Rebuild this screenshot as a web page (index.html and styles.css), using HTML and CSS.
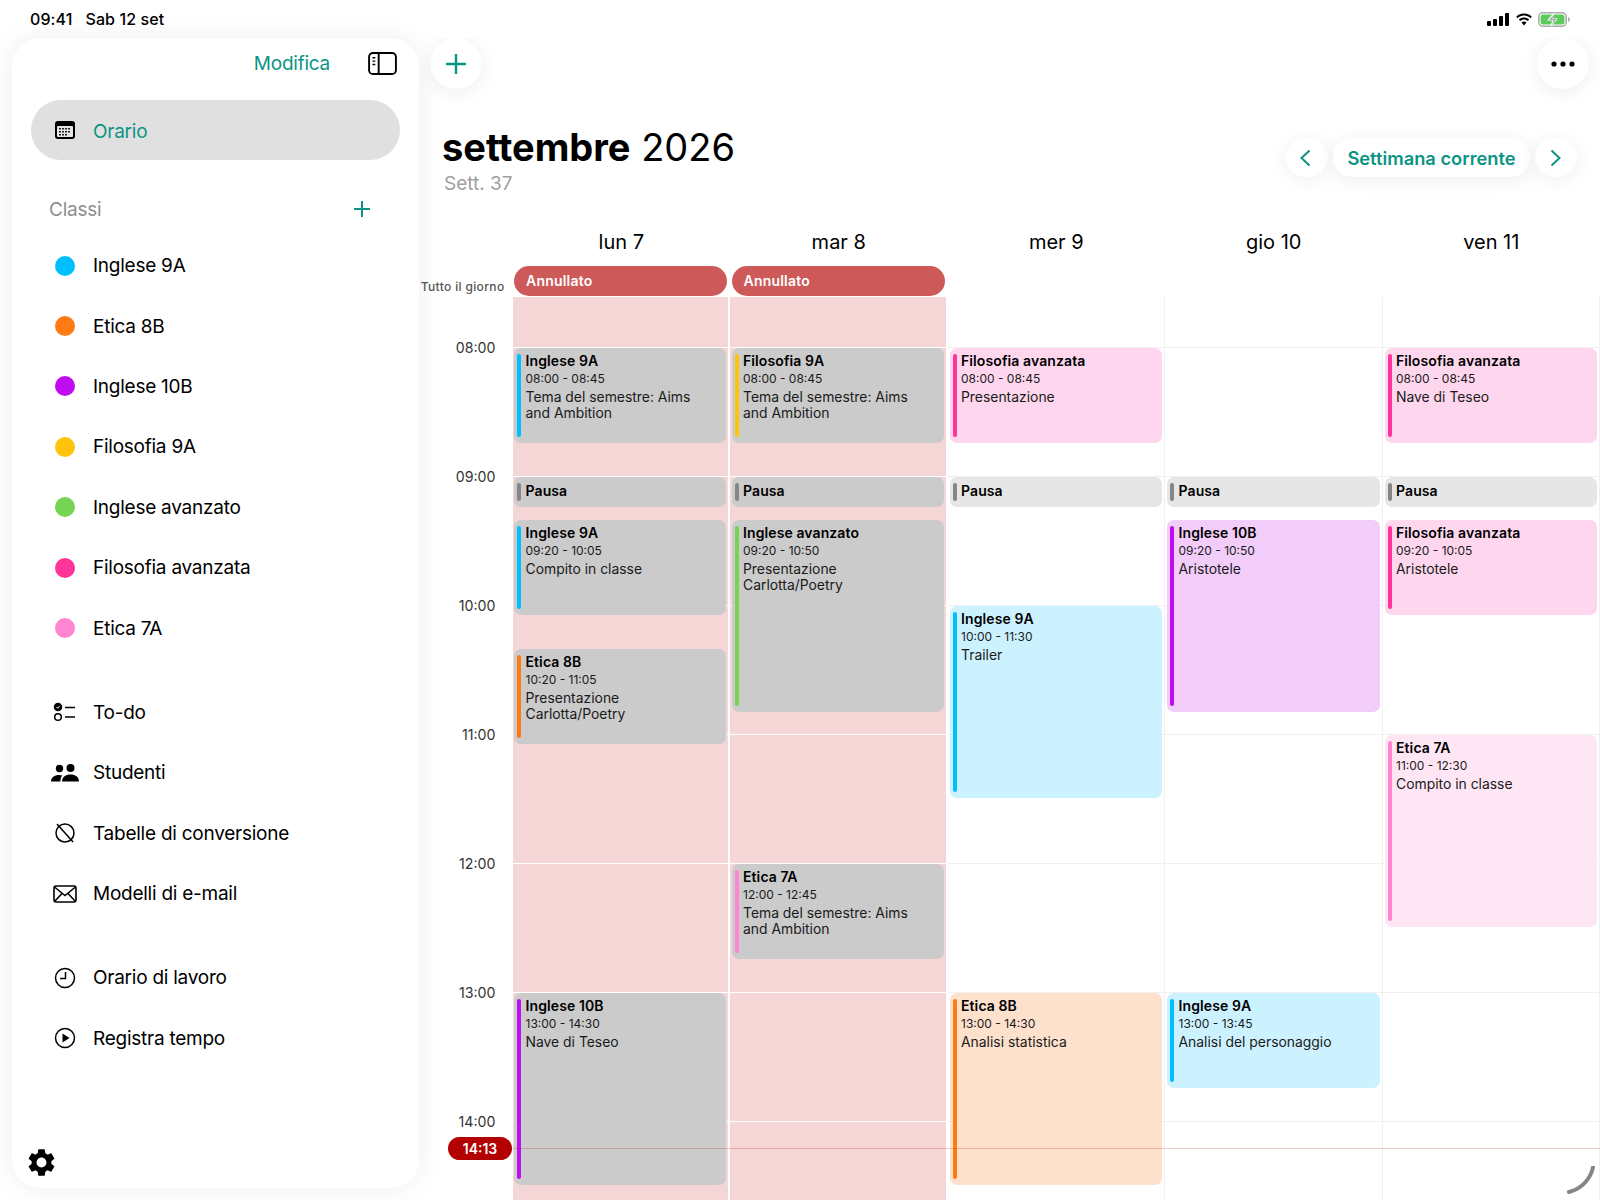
FILE: index.html
```html
<!DOCTYPE html>
<html lang="it">
  <head>
    <meta charset="UTF-8">
    <title>Orario</title>
    <link rel="stylesheet" href="styles.css">
  </head>
  <body>
    <div class="status-bar">
      <div class="status-left"><span>09:41</span><span>Sab 12 set</span></div>
      <div class="status-right">
        <svg width="23" height="13" viewBox="0 0 23 13"><rect x="0" y="8" width="4" height="5" rx="1"/><rect x="6" y="6" width="4" height="7" rx="1"/><rect x="12" y="3" width="4" height="10" rx="1"/><rect x="18" y="0" width="4" height="13" rx="1"/></svg>
        <svg width="18" height="13" viewBox="0 0 18 13"><path d="M9 2.600c2.500 0 4.800 1 6.500 2.600l1.300-1.400C14.700 1.800 12 .6 9 .6S3.300 1.800 1.200 3.800l1.300 1.400C4.200 3.600 6.500 2.600 9 2.600z"/><path d="M9 6.400c1.500 0 2.800.6 3.800 1.500l1.300-1.400C12.800 5.200 11 4.500 9 4.500s-3.800.7-5.100 2l1.300 1.400C6.200 7 7.500 6.400 9 6.400z"/><path d="M9 8.400c-1 0-1.900.4-2.500 1L9 12.500l2.500-3.100c-.6-.6-1.500-1-2.500-1z"/></svg>
        <svg width="32" height="15" viewBox="0 0 32 15"><rect x=".75" y=".75" width="27.500" height="13.500" rx="4" fill="none" stroke="#a9a9a9" stroke-width="1.500"/><rect x="2.500" y="2.500" width="24" height="10" rx="2.500" fill="#5ccb5f"/><path d="M16.500 0 9 8.500h5L12.500 15 20 6.500h-5z" fill="#fff"/><path d="M16 2.500 11 8h4.200l-1 4.500L18.500 7h-4.200z" fill="#a9a9a9"/><path d="M30 5v5c1-.3 1.800-1.300 1.800-2.500S31 5.300 30 5z" fill="#a9a9a9"/></svg>
      </div>
    </div>

    <div class="app">
      <aside class="sidebar">
        <div class="side-head">
          <span class="edit-link">Modifica</span>
          <svg class="side-toggle" width="29" height="23" viewBox="0 0 30 24" fill="none" stroke="#000" stroke-width="2"><rect x="1" y="1" width="28" height="22" rx="4"/><path d="M11 1v22"/><path d="M4.500 6h3M4.500 9.500h3M4.500 13h3" stroke-width="1.500"/></svg>
        </div>

        <div class="side-item active">
          <span class="side-icon">
            <svg width="20" height="18" viewBox="0 0 20 18"><rect width="20" height="18" rx="3" fill="#000"/><rect x="2" y="5" width="16" height="11" rx="1" fill="#e6e6e6"/><g fill="#222"><rect x="4" y="7" width="2" height="1.500"/><rect x="7" y="7" width="2" height="1.500"/><rect x="10" y="7" width="2" height="1.500"/><rect x="13" y="7" width="2" height="1.500"/><rect x="4" y="10" width="2" height="1.500"/><rect x="7" y="10" width="2" height="1.500"/><rect x="10" y="10" width="2" height="1.500"/><rect x="13" y="10" width="2" height="1.500"/><rect x="4" y="13" width="2" height="1.500"/><rect x="7" y="13" width="2" height="1.500"/><rect x="10" y="13" width="2" height="1.500"/></g></svg>
          </span>
          <span class="active-label">Orario</span>
        </div>

        <div class="side-section">
          <span>Classi</span>
          <svg width="18" height="18" viewBox="0 0 18 18" stroke="#0b9484" stroke-width="2"><path d="M9 1v16M1 9h16"/></svg>
        </div>

        <div class="side-group">
          <div class="side-item"><span class="side-icon"><i class="dot c-cyan"></i></span><span>Inglese 9A</span></div>
          <div class="side-item"><span class="side-icon"><i class="dot c-orange"></i></span><span>Etica 8B</span></div>
          <div class="side-item"><span class="side-icon"><i class="dot c-purple"></i></span><span>Inglese 10B</span></div>
          <div class="side-item"><span class="side-icon"><i class="dot c-yellow"></i></span><span>Filosofia 9A</span></div>
          <div class="side-item"><span class="side-icon"><i class="dot c-green"></i></span><span>Inglese avanzato</span></div>
          <div class="side-item"><span class="side-icon"><i class="dot c-hot"></i></span><span>Filosofia avanzata</span></div>
          <div class="side-item"><span class="side-icon"><i class="dot c-pink"></i></span><span>Etica 7A</span></div>
        </div>

        <div class="side-group">
          <div class="side-item">
            <span class="side-icon"><svg width="24" height="20" viewBox="0 0 24 20" fill="none" stroke="#000" stroke-width="1.500"><circle cx="5" cy="5" r="3.500" fill="#000"/><path d="M3.500 5l1.200 1.200L6.700 4" stroke="#fff" stroke-width="1"/><circle cx="5" cy="15" r="3.300"/><path d="M12 5.500h10M12 15h10"/></svg></span>
            <span>To-do</span>
          </div>
          <div class="side-item">
            <span class="side-icon"><svg width="28" height="18" viewBox="0 0 28 18"><circle cx="8.500" cy="4.500" r="3.700"/><circle cx="19.500" cy="4" r="4"/><path d="M0 17.500c0-4 3.500-6.500 8-6.500 1.300 0 2.500.2 3.500.6-1.300 1.300-2 3-2.100 5.900z"/><path d="M11 17.500c0-4.500 3.800-7 8.500-7s8.500 2.500 8.500 7z"/></svg></span>
            <span>Studenti</span>
          </div>
          <div class="side-item">
            <span class="side-icon"><svg width="24" height="24" viewBox="0 0 24 24" fill="none" stroke="#000" stroke-width="1.500"><circle cx="12" cy="12" r="9"/><path d="M4 3l16 18"/></svg></span>
            <span>Tabelle di conversione</span>
          </div>
          <div class="side-item">
            <span class="side-icon"><svg width="24" height="18" viewBox="0 0 24 18" fill="none" stroke="#000" stroke-width="1.600"><rect x="1" y="1" width="22" height="16" rx="2"/><path d="M1.500 2l10.500 8.500L22.500 2M1.500 16.500l7.500-8M22.500 16.500l-7.500-8"/></svg></span>
            <span>Modelli di e-mail</span>
          </div>
        </div>

        <div class="side-group">
          <div class="side-item">
            <span class="side-icon"><svg width="22" height="22" viewBox="0 0 22 22" fill="none" stroke="#000" stroke-width="1.500"><circle cx="11" cy="11" r="9.500"/><path d="M11.500 5v6.500H6"/></svg></span>
            <span>Orario di lavoro</span>
          </div>
          <div class="side-item">
            <span class="side-icon"><svg width="22" height="22" viewBox="0 0 22 22" fill="none" stroke="#000" stroke-width="1.500"><circle cx="11" cy="11" r="9.500"/><path d="M8.500 6.500l7 4.500-7 4.500z" fill="#000" stroke="none"/></svg></span>
            <span>Registra tempo</span>
          </div>
        </div>

        <svg class="side-gear" width="33" height="33" viewBox="0 0 24 24"><path d="M19.140 12.940c.04-.3.06-.61.06-.94 0-.32-.02-.64-.07-.94l2.030-1.580c.18-.14.23-.41.12-.61l-1.920-3.320c-.12-.22-.37-.29-.59-.22l-2.390.96c-.5-.38-1.030-.7-1.620-.94l-.36-2.540c-.04-.24-.24-.41-.48-.41h-3.840c-.24 0-.43.17-.47.41l-.36 2.540c-.59.24-1.130.57-1.620.94l-2.390-.96c-.22-.08-.47 0-.59.22L2.740 8.870c-.12.21-.08.47.12.61l2.030 1.580c-.05.3-.09.63-.09.94s.02.64.07.94l-2.030 1.580c-.18.14-.23.41-.12.61l1.920 3.320c.12.22.37.29.59.22l2.390-.96c.5.38 1.030.7 1.620.94l.36 2.540c.05.24.24.41.48.41h3.840c.24 0 .44-.17.47-.41l.36-2.540c.59-.24 1.130-.56 1.620-.94l2.390.96c.22.08.47 0 .59-.22l1.920-3.320c.12-.22.07-.47-.12-.61l-2.010-1.580zM12 15.600c-1.980 0-3.600-1.620-3.600-3.600s1.620-3.600 3.600-3.600 3.600 1.620 3.600 3.600-1.620 3.600-3.600 3.600z"/></svg>
      </aside>

      <main class="main">
        <div class="top-row">
          <button class="round-btn">
            <svg width="24" height="24" viewBox="0 0 24 24" stroke="#0b9484" stroke-width="2.400"><path d="M12 2v20M2 12h20"/></svg>
          </button>
          <button class="round-btn">
            <svg width="24" height="6" viewBox="0 0 24 6"><circle cx="3" cy="3" r="2.600"/><circle cx="12" cy="3" r="2.600"/><circle cx="21" cy="3" r="2.600"/></svg>
          </button>
        </div>

        <div class="title-row">
          <div>
            <h1 class="month"><b>settembre</b> 2026</h1>
            <div class="week-no">Sett. 37</div>
          </div>
          <div class="week-nav">
            <button class="nav-btn nav-prev"><svg width="12" height="18" viewBox="0 0 12 18" fill="none" stroke="#0b9484" stroke-width="2"><path d="M10.500 1.500 2.500 9l8 7.500"/></svg></button>
            <button class="nav-btn nav-now">Settimana corrente</button>
            <button class="nav-btn"><svg width="12" height="18" viewBox="0 0 12 18" fill="none" stroke="#0b9484" stroke-width="2"><path d="M1.500 1.500 9.500 9l-8 7.500"/></svg></button>
          </div>
        </div>

        <div class="week-head">
          <div></div>
          <div>lun 7</div>
          <div>mar 8</div>
          <div>mer 9</div>
          <div>gio 10</div>
          <div>ven 11</div>
        </div>

        <div class="allday-row">
          <div class="allday-label">Tutto il giorno</div>
          <div class="allday-cell"><div class="allday-pill">Annullato</div></div>
          <div class="allday-cell"><div class="allday-pill">Annullato</div></div>
          <div></div>
          <div></div>
          <div></div>
        </div>

        <div class="week-body">
          <div class="hours">
            <div>08:00</div>
            <div>09:00</div>
            <div>10:00</div>
            <div>11:00</div>
            <div>12:00</div>
            <div>13:00</div>
            <div>14:00</div>
          </div>

          <div class="day cancelled">
            <div class="event c-cyan" style="--start:0;--len:45"><b>Inglese 9A</b><small>08:00 - 08:45</small><p>Tema del semestre: Aims and Ambition</p></div>
            <div class="event c-gray" style="--start:60;--len:15"><b>Pausa</b></div>
            <div class="event c-cyan" style="--start:80;--len:45"><b>Inglese 9A</b><small>09:20 - 10:05</small><p>Compito in classe</p></div>
            <div class="event c-orange" style="--start:140;--len:45"><b>Etica 8B</b><small>10:20 - 11:05</small><p>Presentazione Carlotta/Poetry</p></div>
            <div class="event c-purple" style="--start:300;--len:90"><b>Inglese 10B</b><small>13:00 - 14:30</small><p>Nave di Teseo</p></div>
          </div>

          <div class="day cancelled">
            <div class="event c-yellow" style="--start:0;--len:45"><b>Filosofia 9A</b><small>08:00 - 08:45</small><p>Tema del semestre: Aims and Ambition</p></div>
            <div class="event c-gray" style="--start:60;--len:15"><b>Pausa</b></div>
            <div class="event c-green" style="--start:80;--len:90"><b>Inglese avanzato</b><small>09:20 - 10:50</small><p>Presentazione Carlotta/Poetry</p></div>
            <div class="event c-pink" style="--start:240;--len:45"><b>Etica 7A</b><small>12:00 - 12:45</small><p>Tema del semestre: Aims and Ambition</p></div>
          </div>

          <div class="day">
            <div class="event c-hot" style="--start:0;--len:45"><b>Filosofia avanzata</b><small>08:00 - 08:45</small><p>Presentazione</p></div>
            <div class="event c-gray" style="--start:60;--len:15"><b>Pausa</b></div>
            <div class="event c-cyan" style="--start:120;--len:90"><b>Inglese 9A</b><small>10:00 - 11:30</small><p>Trailer</p></div>
            <div class="event c-orange" style="--start:300;--len:90"><b>Etica 8B</b><small>13:00 - 14:30</small><p>Analisi statistica</p></div>
          </div>

          <div class="day">
            <div class="event c-gray" style="--start:60;--len:15"><b>Pausa</b></div>
            <div class="event c-purple" style="--start:80;--len:90"><b>Inglese 10B</b><small>09:20 - 10:50</small><p>Aristotele</p></div>
            <div class="event c-cyan" style="--start:300;--len:45"><b>Inglese 9A</b><small>13:00 - 13:45</small><p>Analisi del personaggio</p></div>
          </div>

          <div class="day">
            <div class="event c-hot" style="--start:0;--len:45"><b>Filosofia avanzata</b><small>08:00 - 08:45</small><p>Nave di Teseo</p></div>
            <div class="event c-gray" style="--start:60;--len:15"><b>Pausa</b></div>
            <div class="event c-hot" style="--start:80;--len:45"><b>Filosofia avanzata</b><small>09:20 - 10:05</small><p>Aristotele</p></div>
            <div class="event c-pink" style="--start:180;--len:90"><b>Etica 7A</b><small>11:00 - 12:30</small><p>Compito in classe</p></div>
          </div>

          <div class="now-line"></div>
          <div class="now-pill">14:13</div>
          <svg class="pencil-mark" width="30" height="30" viewBox="0 0 30 30" fill="none" stroke="#858585" stroke-width="4" stroke-linecap="round"><path d="M27 1C25 12 16 23 3 26"/></svg>
        </div>
      </main>
    </div>
  </body>
</html>
```

FILE: styles.css
```css
body {
  margin: 0;
  width: 1600px;
  height: 1200px;
  overflow: hidden;
  background: #fff;
  color: #000;
  font-family: Inter, "Liberation Sans", sans-serif;
}

button {
  border: none;
  font-family: inherit;
  cursor: pointer;
}

/* class colours */
.c-cyan { --bar: #00bfff; --tint: #cdf2ff; }
.c-orange { --bar: #ff7a12; --tint: #fde1cc; }
.c-purple { --bar: #bf0cf0; --tint: #f2cdf9; }
.c-yellow { --bar: #ffc30b; --tint: #fff2c8; }
.c-green { --bar: #77d353; --tint: #e2f6da; }
.c-hot { --bar: #ff3399; --tint: #fed7ee; }
.c-pink { --bar: #ff85d0; --tint: #fee6f5; }
.c-gray { --bar: #868686; --tint: #e6e6e6; }

.status-bar {
  height: 38px;
  padding: 0 30px;
  display: flex;
  justify-content: space-between;
  align-items: center;
  font-size: 16px;
  font-weight: 500;
  letter-spacing: 0.1px;
}

.status-left {
  display: flex;
  gap: 13px;
}

.status-right {
  display: flex;
  align-items: center;
  gap: 5px;
}

.app {
  display: flex;
  height: 1162px;
}

/* sidebar */
.sidebar {
  position: relative;
  z-index: 2;
  width: 407px;
  height: 1150px;
  margin-left: 12px;
  flex: none;
  display: flex;
  flex-direction: column;
  background: #fff;
  border-radius: 28px;
  box-shadow: 0 0 28px rgba(0, 0, 0, 0.07);
  font-size: 19px;
  letter-spacing: -0.25px;
}

.side-head {
  height: 50px;
  padding-right: 22px;
  flex: none;
  display: flex;
  justify-content: flex-end;
  align-items: center;
  gap: 38px;
}

.edit-link {
  color: #0b9484;
}

.side-item {
  height: 60.4px;
  padding-left: 38px;
  flex: none;
  display: flex;
  align-items: center;
  gap: 13px;
}

.side-item.active {
  height: 60px;
  margin: 12px 19px 0;
  padding-left: 19px;
  background: #e0e0e0;
  border-radius: 30px;
  color: #0b9484;
}

.active-label {
  padding-top: 2px;
}

.side-icon {
  width: 30px;
  flex: none;
  display: flex;
  justify-content: center;
  align-items: center;
}

.dot {
  width: 20px;
  height: 20px;
  border-radius: 50%;
  background: var(--bar);
}

.side-section {
  height: 52.5px;
  margin-top: 23px;
  padding: 0 48px 0 37px;
  flex: none;
  display: flex;
  justify-content: space-between;
  align-items: center;
  color: #8e8e8e;
}

.side-group + .side-group {
  margin-top: 24px;
}

.side-gear {
  margin: auto 0 9px 13px;
  flex: none;
}

/* main column */
.main {
  flex: 1;
  min-width: 0;
  overflow: hidden;
  display: flex;
  flex-direction: column;
}

.top-row {
  height: 51px;
  padding: 0 11px;
  flex: none;
  display: flex;
  justify-content: space-between;
  align-items: flex-start;
}

.round-btn {
  width: 52px;
  height: 51px;
  display: flex;
  justify-content: center;
  align-items: center;
  background: #fff;
  border-radius: 50%;
  box-shadow: 0 3px 20px rgba(0, 0, 0, 0.07);
}

.title-row {
  height: 138px;
  padding: 33px 23px 0 23px;
  box-sizing: border-box;
  flex: none;
  display: flex;
  justify-content: space-between;
}

.month {
  margin: 0;
  font-size: 38px;
  font-weight: 400;
  line-height: 50px;
}

.week-no {
  margin-left: 2px;
  font-size: 19px;
  line-height: 24px;
  color: #a0a0a0;
}

.week-nav {
  margin-top: 16px;
  height: 40px;
  display: flex;
  gap: 5px;
}

.nav-btn {
  width: 42px;
  height: 39px;
  padding: 0;
  display: flex;
  justify-content: center;
  align-items: center;
  background: #fff;
  border-radius: 20px;
  box-shadow: 0 3px 20px rgba(0, 0, 0, 0.07);
}

.nav-prev {
  padding-right: 4px;
}

.nav-now {
  width: 197px;
  font-size: 18.3px;
  font-weight: 600;
  color: #0b9484;
}

.week-head,
.allday-row,
.week-body {
  display: grid;
  grid-template-columns: 93.5px repeat(5, 217.5px);
  flex: none;
}

.week-head {
  height: 30px;
  margin-bottom: 9px;
  font-size: 20px;
  line-height: 30px;
  text-align: center;
}

.allday-row {
  height: 31px;
}

.allday-label {
  padding: 13px 8px 0 0;
  font-size: 12px;
  font-weight: 500;
  line-height: 16px;
  letter-spacing: 0.35px;
  text-align: right;
  color: #555;
  white-space: nowrap;
}

.allday-cell {
  padding: 0 3px 1px 1.5px;
}

.allday-pill {
  height: 30px;
  padding-left: 12px;
  background: #cd5959;
  border-radius: 15px;
  font-size: 14px;
  font-weight: 600;
  letter-spacing: 0.2px;
  line-height: 30px;
  color: #fff;
}

/* week grid */
.week-body {
  position: relative;
  height: 903px;
  overflow: hidden;
}

.hours {
  margin-top: -14.5px;
  padding-right: 17px;
  font-size: 14.2px;
  color: #333;
  text-align: right;
}

.hours div {
  height: 129px;
  line-height: 129px;
}

.day {
  position: relative;
  border-right: 1px solid #f0f0f0;
  background-image: repeating-linear-gradient(to bottom, #f0f0f0 0, #f0f0f0 1px, transparent 1px, transparent 129px);
  background-position: 0 50px;
}

.day.cancelled {
  border-right: 2px solid #fff;
  background-color: #f4d6d7;
  background-image: repeating-linear-gradient(to bottom, #fff 0, #fff 1px, transparent 1px, transparent 129px);
}

.event {
  position: absolute;
  top: calc(51px + var(--start) * 2.15px);
  left: 2px;
  right: 2px;
  height: calc(var(--len) * 2.15px - 2px);
  padding: 3.5px 22px 0 11.5px;
  box-sizing: border-box;
  background: var(--tint);
  border-radius: 7px;
  overflow: hidden;
  font-size: 13.9px;
  line-height: 16.5px;
  color: #1a1a1a;
}

.event.c-gray {
  padding-top: 4.5px;
}

.cancelled .event {
  left: 1.5px;
  background: #cbcbcb;
}

.event::before {
  content: "";
  position: absolute;
  top: 6px;
  bottom: 6px;
  left: 3px;
  width: 4px;
  border-radius: 2px;
  background: var(--bar);
}

.event b {
  display: block;
  font-size: 14px;
  font-weight: 600;
  letter-spacing: 0.1px;
  line-height: 18px;
  color: #000;
}

.event small {
  display: block;
  font-size: 12px;
  line-height: 17px;
}

.event p {
  margin: 2px 0 0;
}

.now-line {
  position: absolute;
  top: 851px;
  left: 93.5px;
  right: 0;
  height: 1px;
  background: rgba(205, 40, 30, 0.26);
}

.now-pill {
  position: absolute;
  top: 840px;
  left: 29px;
  width: 64px;
  height: 23px;
  background: #b30000;
  border-radius: 12px;
  font-size: 14px;
  font-weight: 600;
  line-height: 23px;
  text-align: center;
  color: #fff;
}

.pencil-mark {
  position: absolute;
  top: 869px;
  left: 1147px;
}
```
